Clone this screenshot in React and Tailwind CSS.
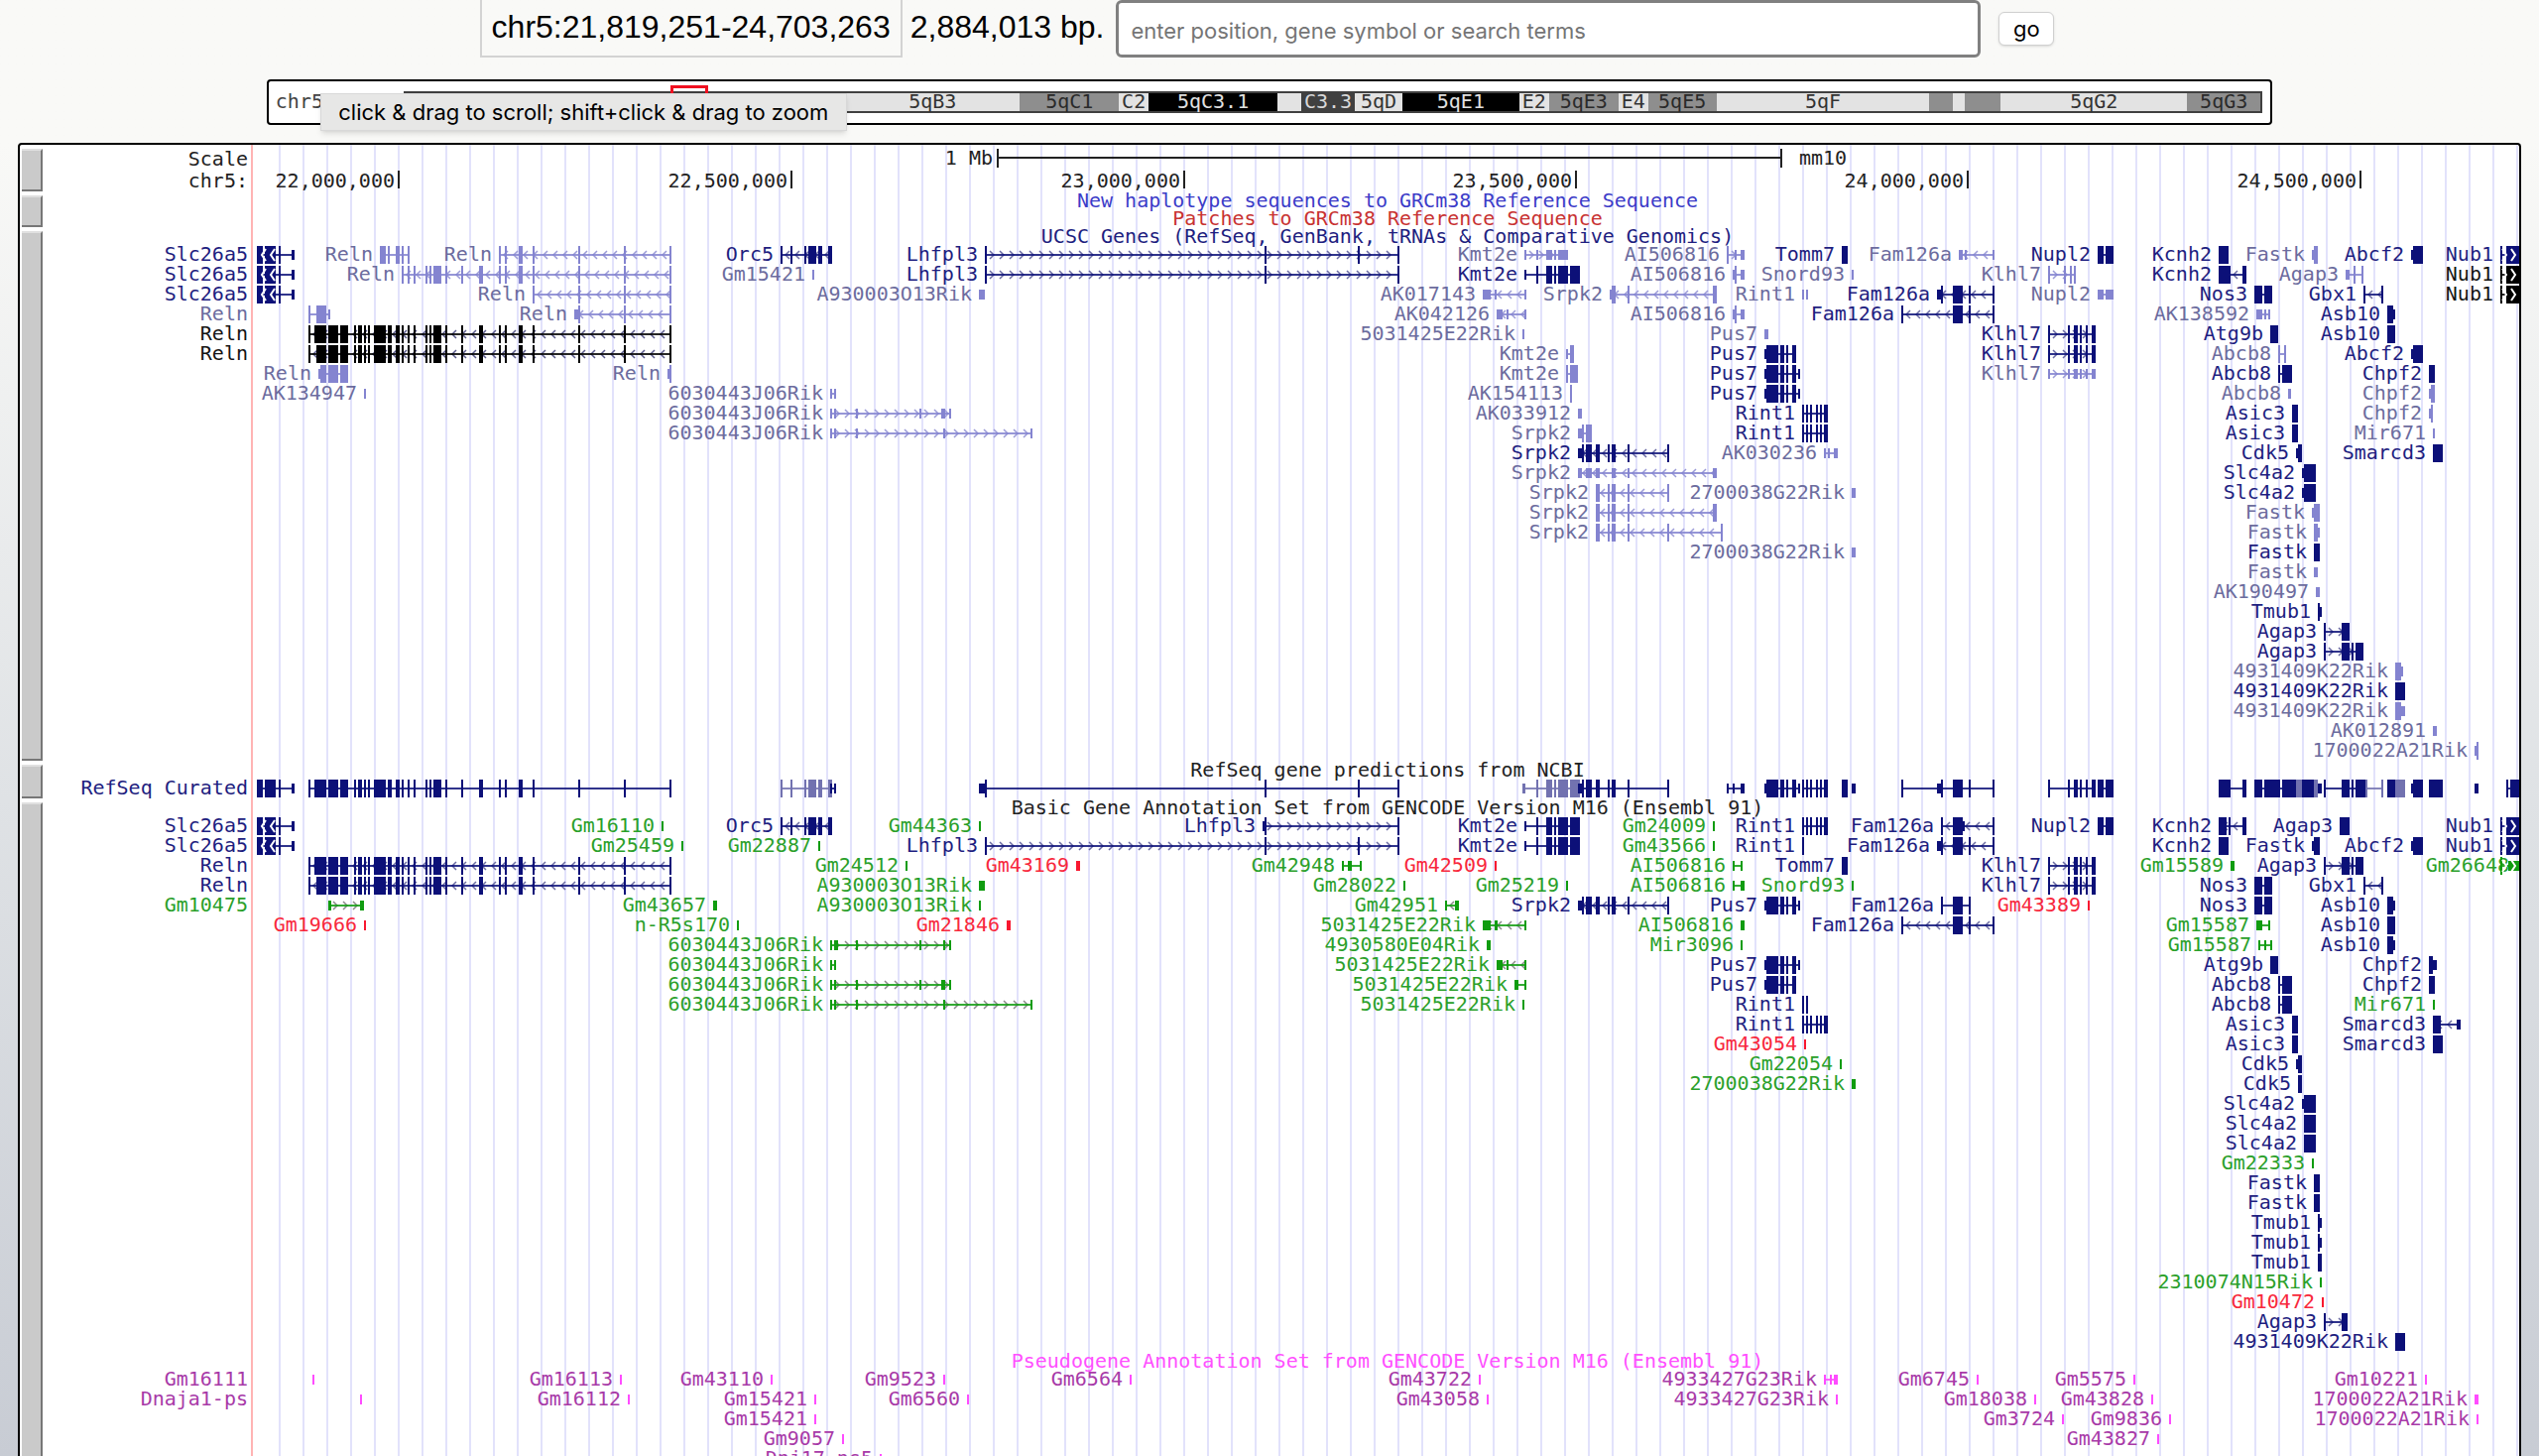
const COLORS = {
  D: { text: "#1e1e80", fill: "#0c1078", arrow: "#6c6ca4" },
  L: { text: "#6c6c9e", fill: "#8484d0", arrow: "#9c9cd8" },
  M: { text: "#7070ac", fill: "#7272b0", arrow: "#7272b0" },
  K: { text: "#141414", fill: "#000000", arrow: "#5a5a8c" },
  G: { text: "#2aa02a", fill: "#109c10", arrow: "#8a8a8a" },
  R: { text: "#f8283c", fill: "#f81830", arrow: "#f81830" },
  P: { text: "#a83aa8", fill: "#ff4cff", arrow: "#ff4cff" },
};

const CHART_LEFT = 256;
const CHART_WIDTH = 2284;
const ROW = 20;

const SLC = "259+6 267+11 281 u294+3";
const RELN_TAIL = "583 629 675";
const RELN_MID = "449 465 483+4 503 509 523+4 537 " + RELN_TAIL;
const RELN_CORE =
  "331+10 343+8 357 361+4 367 371 377+12 391+4 399+4 405 411 417 429 433 437+8 " + RELN_MID;
const RELN_A = "311 317+12 " + RELN_CORE;
const RELN_B = "311 319+10 " + RELN_CORE;
const ORC5 = "787 797 811 815+8 825+4 835+4";
const KMT2E = "u1537 1549 1559+6 1567 1571+10 1583+10";
const PUS7 = "u1779 1781+12 1795+4 1801 1807+4";
const PUS7_LONG = PUS7 + " u1813";
const RINT1 = "1817 1821 1825 1831 1835 1839+4";
const FAM_LONG = "1917 1969+10 1985 2009";
const FAM_MID = "u1953+4 1957 1969+10 1985 2009";
const KLHL7 = "2065 2085 2091+4 2097 2103 2109+4";
const NUPL2 = "2115+6 2123+8";
const KCNH2 = "2237+8 2247 2261+4";
const NOS3 = "2273+8 2283+8";
const ABCF2 = "u2431 2433+10";
const AGAP3 = "2343 2361+8 2371 2375+8";
const SRPK2 = "u1591+4 1595 1599+6 1609+4 1621 1625+4 1641 1681";
const SRPK2_B = "1609+4 1621 1625+4 1641";
const RIK603_A = "u837 u841 u863 u927 u949+4 u957";
const RIK603_B = "u837 u841 u863 u951 u1039";
const NUB1 = "2521 2527+13";

// Each gene: [label, colour key, strand, blocks]. A block is start+width, "u" marks a half-height one.
const UCSC = [
  [["", "D", "w<", SLC], ["Reln", "L", "", "383+6 391 399+4 405 411"], ["Reln", "L", "<", "503 509 523+4 537 " + RELN_TAIL], ["Orc5", "D", "<", ORC5], ["Lhfpl3", "D", ">", "993 1275 1369 1409"], ["Kmt2e", "L", ">", "u1537 u1549 u1559+6 u1567 u1571+10"], ["AI506816", "L", ">", "1741 u1749 u1755+4"], ["Tomm7", "D", "", "1857+6"], ["Fam126a", "L", "<", "u1975+4 u1981 u2009"], ["Nupl2", "D", "", NUPL2], ["Kcnh2", "D", "", "2237+10"], ["Fastk", "L", "", "u2331 2333+4"], ["Abcf2", "D", "", ABCF2], ["Nub1", "D", "w>", NUB1]],
  [["", "D", "w<", SLC], ["Reln", "L", "<", "405 411 417 429 433 437+8 " + RELN_MID], ["Gm15421", "L", "", "u819"], ["Lhfpl3", "D", ">", "993 1275 1409"], ["Kmt2e", "D", "", KMT2E], ["AI506816", "L", "", "u1747 1749 u1755+4"], ["Snord93", "L", "", "u1867"], ["Klhl7", "L", ">", "2065 2081 2087 2091"], ["Kcnh2", "D", "<", "2237+10 2247 2261+4"], ["Agap3", "L", "", "u2365+4 2373 2381"], ["Nub1", "K", "w>", NUB1]],
  [["", "D", "w<", SLC], ["Reln", "L", "<", "537 " + RELN_TAIL], ["A930003O13Rik", "L", "", "u987+6"], ["AK017143", "L", "<", "u1495+8 u1507 u1537"], ["Srpk2", "L", "<", "u1623 1625+4 1641 1727+4"], ["Rint1", "L", "-", "u1817 u1821"], ["Fam126a", "D", "<", FAM_MID], ["Nupl2", "L", "", "u2115+6 u2123+8"], ["Nos3", "D", "", NOS3], ["Gbx1", "D", "<", "2383 2401"], ["Nub1", "K", "w>", NUB1]],
  [["", "L", "", "311 319+10 u331"], ["Reln", "L", "<", "u579+4 " + RELN_TAIL], ["AK042126", "L", "<", "u1509+6 u1519 u1537"], ["AI506816", "L", "", "u1747 1749 u1755+4"], ["Fam126a", "D", "<", FAM_LONG], ["AK138592", "L", "", "u2275+6 u2283 u2287"], ["Asb10", "D", "", "2407+6 u2411+4"]],
  [["", "K", "<", RELN_A], ["5031425E22Rik", "L", "", "u1535"], ["Pus7", "L", "", "u1779+4"], ["Klhl7", "D", ">", KLHL7], ["Atg9b", "D", "", "2289+8"], ["Asb10", "D", "", "2407+8"]],
  [["", "K", "<", RELN_B], ["Kmt2e", "L", "", "u1579 1583+4"], ["Pus7", "D", "", PUS7], ["Klhl7", "D", ">", KLHL7], ["Abcb8", "L", "", "2297 2303"], ["Abcf2", "D", "", ABCF2]],
  [["Reln", "L", "", "u321 323+6 331+10 343+8"], ["Reln", "L", "", "u673 675"], ["Kmt2e", "L", "", "1579 1583+8"], ["Pus7", "D", "", PUS7_LONG], ["Klhl7", "L", ">", "u2065 u2085 u2091+4 u2097 u2103 u2109+4"], ["Abcb8", "D", "", "2297 2301+10"], ["Chpf2", "D", "", "2449+6"]],
  [["AK134947", "L", "", "u367"], ["6030443J06Rik", "L", "", "u837 u841"], ["AK154113", "L", "", "1583"], ["Pus7", "D", "", PUS7_LONG], ["Abcb8", "L", "", "u2307+3"], ["Chpf2", "L", "", "u2449 2451+4"]],
  [["6030443J06Rik", "L", ">", RIK603_A], ["AK033912", "L", "", "u1591+4"], ["Rint1", "D", "", RINT1], ["Asic3", "D", "", "2311+6"], ["Chpf2", "L", "", "u2449 2451"]],
  [["6030443J06Rik", "L", ">", RIK603_B], ["Srpk2", "L", "", "u1591+4 1595 1599+6"], ["Rint1", "D", "", RINT1], ["Asic3", "D", "", "2311+6"], ["Mir671", "L", "", "u2453"]],
  [["Srpk2", "D", "<", SRPK2], ["AK030236", "L", "", "u1839 u1843 u1849+4"], ["Cdk5", "D", "", "u2315 2317+4"], ["Smarcd3", "D", "", "2453+10"]],
  [["Srpk2", "L", "<", "u1591+4 u1599+6 u1609+4 u1625+4 u1641 u1727+4"], ["Slc4a2", "D", "", "u2321 2323+12"]],
  [["Srpk2", "L", "<", SRPK2_B + " 1681"], ["2700038G22Rik", "L", "", "u1867+4"], ["Slc4a2", "D", "", "u2321 2323+12"]],
  [["Srpk2", "L", "<", SRPK2_B + " 1727+4"], ["Fastk", "L", "", "u2331 2333+6"]],
  [["Srpk2", "L", "<", SRPK2_B + " 1681 1735"], ["Fastk", "L", "", "2333+4 u2335+4"]],
  [["2700038G22Rik", "L", "", "u1867+4"], ["Fastk", "D", "", "2333+6"]],
  [["Fastk", "L", "", "u2333+4"]],
  [["AK190497", "L", "", "u2335+4"]],
  [["Tmub1", "D", "", "2337 u2339"]],
  [["Agap3", "D", ">", "2343 2361+8"]],
  [["Agap3", "D", ">", AGAP3]],
  [["4931409K22Rik", "L", "", "2415+6 u2421"]],
  [["4931409K22Rik", "D", "", "2415+10"]],
  [["4931409K22Rik", "L", "", "2415+6 u2419+6"]],
  [["AK012891", "L", "", "u2453+4"]],
  [["1700022A21Rik", "L", "", "u2495 2497"]],
];

const REFSEQ = [
  [
    ["", "D", "", SLC], ["", "D", "", RELN_A], ["", "M", "", ORC5], ["", "D", "", "u837 u841"],
    ["", "D", "", "u987+6 993 1275 1369 1409"], ["", "M", "", "1549 1559+6 1567 1571+10 1583+10"], ["", "M", "", "u1535+3 1549"],
    ["", "D", "", SRPK2], ["", "D", "", "u1741 u1747 u1755+4"], ["", "D", "", PUS7_LONG], ["", "D", "", RINT1],
    ["", "D", "", "1857+6"], ["", "D", "", "u1867+4"], ["", "D", "", "1917 u1953+4 1957 1969+10 1985 2009"],
    ["", "D", "", KLHL7], ["", "D", "", NUPL2], ["", "D", "", "2237+12 2261+4"], ["", "D", "", "2273+8 2283+16 2301+14"],
    ["", "M", "", "2315+6"], ["", "D", "", "2321+12"], ["", "M", "", "2333+4"], ["", "D", "", "u2337+4"],
    ["", "D", "", "2343 2361+8 2371 2375+10"], ["", "M", "", "2385 2401"], ["", "D", "", "2407+8"], ["", "M", "", "2415+10"],
    ["", "D", "", ABCF2], ["", "D", "", "2449+14"], ["", "D", "", "u2495+4"], ["", "D", "", "2527 2531+9"],
  ],
];

const GENCODE = [
  [["", "D", "w<", SLC], ["Gm16110", "G", "", "u667"], ["Orc5", "D", "<", ORC5], ["Gm44363", "G", "", "u987"], ["Lhfpl3", "D", ">", "u1273 1275 1409"], ["Kmt2e", "D", "", KMT2E], ["Gm24009", "G", "", "u1727"], ["Rint1", "D", "", RINT1], ["Fam126a", "D", "<", "1957 1969+10 u1979 2009"], ["Nupl2", "D", "", NUPL2], ["Kcnh2", "D", "<", KCNH2], ["Agap3", "D", "", "2359+10"], ["Nub1", "D", "w>", NUB1]],
  [["", "D", "w<", SLC], ["Gm25459", "G", "", "u687"], ["Gm22887", "G", "", "u825"], ["Lhfpl3", "D", ">", "993 1275 1369 1409"], ["Kmt2e", "D", "", KMT2E], ["Gm43566", "G", "", "u1727"], ["Rint1", "D", "", "1817"], ["Fam126a", "D", "<", FAM_MID], ["Kcnh2", "D", "", "2237+10"], ["Fastk", "D", "", "u2331 2333+6"], ["Abcf2", "D", "", ABCF2], ["Nub1", "D", "w>", NUB1]],
  [["", "D", "<", RELN_A], ["Gm24512", "G", "", "u913"], ["Gm43169", "R", "", "u1085+4"], ["Gm42948", "G", "", "u1353 u1359+4 u1371"], ["Gm42509", "R", "", "u1507"], ["AI506816", "G", "", "u1747 u1755"], ["Tomm7", "D", "", "1857+6"], ["Klhl7", "D", ">", KLHL7], ["Gm15589", "G", "", "u2249+4"], ["Agap3", "D", ">", AGAP3], ["Gm26648", "G", "w>", "2521 u2529+11", 2530]],
  [["", "D", "<", RELN_B], ["A930003O13Rik", "G", "", "u987+6"], ["Gm28022", "G", "", "u1415"], ["Gm25219", "G", "", "u1579"], ["AI506816", "G", "", "u1747 u1755+4"], ["Snord93", "G", "", "u1867"], ["Klhl7", "D", ">", KLHL7], ["Nos3", "D", "", NOS3], ["Gbx1", "D", "<", "2383 2401"]],
  [["", "G", ">", "u331+3 u363+4"], ["Gm43657", "G", "", "u719+4"], ["A930003O13Rik", "G", "", "u987"], ["Gm42951", "G", "<", "u1457 u1467+4"], ["Srpk2", "D", "<", SRPK2], ["Pus7", "D", "", PUS7_LONG], ["Fam126a", "D", "", "1957 1969+10 1985"], ["Gm43389", "R", "", "u2105"], ["Nos3", "D", "", NOS3], ["Asb10", "D", "", "2407+6 u2411+4"]],
  [["Gm19666", "R", "", "u367"], ["n-R5s170", "G", "", "u743"], ["Gm21846", "R", "", "u1015+4"], ["5031425E22Rik", "G", "<", "u1495+8 u1507+3 u1537"], ["AI506816", "G", "", "u1755+4"], ["Fam126a", "D", "<", FAM_LONG], ["Gm15587", "G", "", "u2275+6 u2287"], ["Asb10", "D", "", "2407+8"]],
  [["6030443J06Rik", "G", ">", "u837 u841+4 u863 u927 u951 u957"], ["4930580E04Rik", "G", "", "u1499+4"], ["Mir3096", "G", "", "u1755"], ["Gm15587", "G", "", "u2277 u2283 u2289"], ["Asb10", "D", "", "2407+6 u2411+4"]],
  [["6030443J06Rik", "G", "", "u837 u841"], ["5031425E22Rik", "G", "<", "u1509+6 u1519 u1537"], ["Pus7", "D", "", PUS7_LONG], ["Atg9b", "D", "", "2289+8"], ["Chpf2", "D", "", "2449+4 u2453+4"]],
  [["6030443J06Rik", "G", ">", RIK603_A], ["5031425E22Rik", "G", "", "u1527+4 u1537"], ["Pus7", "D", "", PUS7], ["Abcb8", "D", "", "2297 2301+10"], ["Chpf2", "D", "", "2449+6"]],
  [["6030443J06Rik", "G", ">", RIK603_B], ["5031425E22Rik", "G", "", "u1535"], ["Rint1", "D", "-", "1817 1821"], ["Abcb8", "D", "", "2297 2301+10"], ["Mir671", "G", "", "u2453"]],
  [["Rint1", "D", "", RINT1], ["Asic3", "D", "", "2311+6"], ["Smarcd3", "D", "<", "2453+8 u2477+4"]],
  [["Gm43054", "R", "", "u1819"], ["Asic3", "D", "", "2311+6"], ["Smarcd3", "D", "", "2453+10"]],
  [["Gm22054", "G", "", "u1855"], ["Cdk5", "D", "", "u2315 2317+4"]],
  [["2700038G22Rik", "G", "", "u1867+4"], ["Cdk5", "D", "", "2317+4"]],
  [["Slc4a2", "D", "", "u2321 2323+12"]],
  [["Slc4a2", "D", "", "2323+12"]],
  [["Slc4a2", "D", "", "2323+12"]],
  [["Gm22333", "G", "", "u2331"]],
  [["Fastk", "D", "", "2333+6"]],
  [["Fastk", "D", "", "2333+6"]],
  [["Tmub1", "D", "", "2337 u2339"]],
  [["Tmub1", "D", "", "2337 u2339"]],
  [["Tmub1", "D", "", "2337+4"]],
  [["2310074N15Rik", "G", "", "u2339"]],
  [["Gm10472", "R", "", "u2341"]],
  [["Agap3", "D", ">", "2343 2361+6"]],
  [["4931409K22Rik", "D", "", "2415+10"]],
];

const PSEUDO = [
  [["", "P", "", "u315"], ["Gm16113", "P", "", "u625"], ["Gm43110", "P", "", "u777"], ["Gm9523", "P", "", "u951"], ["Gm6564", "P", "", "u1139"], ["Gm43722", "P", "", "u1491"], ["4933427G23Rik", "P", "", "u1839 u1845 u1849+4"], ["Gm6745", "P", "", "u1993"], ["Gm5575", "P", "", "u2151"], ["Gm10221", "P", "", "u2445"]],
  [["", "P", "", "u363"], ["Gm16112", "P", "", "u633"], ["Gm15421", "P", "", "u821"], ["Gm6560", "P", "", "u975"], ["Gm43058", "P", "", "u1499"], ["4933427G23Rik", "P", "", "u1851"], ["Gm18038", "P", "", "u2051"], ["Gm43828", "P", "", "u2169"], ["1700022A21Rik", "P", "", "u2495+4"]],
  [["Gm15421", "P", "", "u821"], ["Gm3724", "P", "", "u2079"], ["Gm9836", "P", "", "u2187"], ["1700022A21Rik", "P", "", "u2497"]],
  [["Gm9057", "P", "", "u849"], ["Gm43827", "P", "", "u2175"]],
  [["Dnj17-ps5", "P", "", "u887"]],
];

const BANDS = [
  [184, "black"], [16, "light"], [120, "black"], [126, "light"], [176, "light", "5qB3"], [100, "gray", "5qC1"], [30, "light", "C2"],
  [130, "black", "5qC3.1"], [24, "light"], [54, "dark", "C3.3"], [48, "light", "5qD"], [118, "black", "5qE1"], [30, "light", "E2"],
  [70, "gray", "5qE3"], [30, "light", "E4"], [69, "gray", "5qE5"], [215, "light", "5qF"], [24, "gray"], [12, "light"], [36, "gray"],
  [188, "light", "5qG2"], [74, "gray", "5qG3"],
];

const BAND_STYLES = {
  black: "bg-black text-[#e0e0e0]",
  dark: "bg-[#404040] text-[#d8d8d8]",
  gray: "bg-[#8e8e8e] text-[#2a2a2a]",
  light: "bg-[#e3e3e3] text-[#333333]",
};

const TICKS = [
  ["22,000,000", 401], ["22,500,000", 797], ["23,000,000", 1193],
  ["23,500,000", 1588], ["24,000,000", 1983], ["24,500,000", 2379],
];

const MONO = "font-['DejaVu_Sans_Mono','Liberation_Mono',monospace] text-[20px]";
const SANS = "font-['Inter','Liberation_Sans',sans-serif]";

const percent = (x) => `${((x - CHART_LEFT) / CHART_WIDTH) * 100}%`;

function parseBlocks(blocks) {
  return blocks.split(" ").map((token) => {
    const half = token[0] === "u";
    const [x, w] = token.slice(half ? 1 : 0).split("+").map(Number);
    return { x, w: w || 2, half };
  });
}

function chevrons(from, to, y, dir, step, reach) {
  let d = "";
  for (let x = from; x + 4 <= to; x += step) {
    d += dir === ">"
      ? `M${x} ${y - reach}l4 ${reach}l-4 ${reach}`
      : `M${x + 4} ${y - reach}l-4 ${reach}l4 ${reach}`;
  }
  return d;
}

function Gene({ gene, top }) {
  const [, tone, strand, spec] = gene;
  const color = COLORS[tone];
  const blocks = parseBlocks(spec);
  const first = blocks[0];
  const last = blocks[blocks.length - 1];
  const dir = strand[strand.length - 1];
  const overlay = strand[0] === "w";
  const end = last.x + last.w;
  return (
    <g>
      {!overlay && (dir === "<" || dir === ">") && (
        <path d={chevrons(first.x + 5, end, top + 10, dir, 10, 4)} fill="none" stroke={color.arrow} strokeWidth="1.5" />
      )}
      {blocks.length > 1 && strand !== "-" && (
        <rect x={first.x} y={top + 9} width={end - first.x} height="2" fill={color.fill} opacity="0.85" />
      )}
      {blocks.map((b, i) => (
        <rect key={i} x={b.x} y={top + (b.half ? 5 : 1)} width={b.w} height={b.half ? 10 : 18} fill={color.fill} />
      ))}
      {overlay && (
        <path
          d={chevrons(dir === ">" ? first.x + 2 : first.x + 5, dir === ">" ? end : first.x + 19, top + 10, dir, 9, 6)}
          fill="none"
          stroke="#ffffff"
          strokeWidth="2"
        />
      )}
    </g>
  );
}

function GeneChart({ rows }) {
  const height = rows.length * ROW;
  return (
    <svg className={`block w-full ${MONO}`} height={height} role="img" aria-label="Gene features">
      {rows.map((row, r) =>
        row.filter((gene) => gene[0]).map((gene, i) => (
          <text
            key={`${r}-${i}`}
            x={percent(gene[4] || parseBlocks(gene[3])[0].x - 7)}
            y={r * ROW + 16}
            textAnchor="end"
            fill={COLORS[gene[1]].text}
          >
            {gene[0]}
          </text>
        ))
      )}
      <svg width="100%" height={height} viewBox={`${CHART_LEFT} 0 ${CHART_WIDTH} ${height}`} preserveAspectRatio="none">
        {rows.map((row, r) => row.map((gene, i) => <Gene key={`${r}-${i}`} gene={gene} top={r * ROW} />))}
      </svg>
    </svg>
  );
}

function Handle({ label }) {
  return (
    <button
      type="button"
      aria-label={label}
      className="mt-1 ml-[2px] w-[21px] shrink-0 border-t-2 border-r-2 border-b-2 border-t-[#e0e0e0] border-r-[#777777] border-b-[#777777] bg-[#cacaca]"
    />
  );
}

function Track({ name, children }) {
  return (
    <section className="flex">
      <Handle label={name} />
      <div className="min-w-0 flex-1">{children}</div>
    </section>
  );
}

function Title({ className, children }) {
  return (
    <h2 className={`ml-[215px] h-[18px] text-center leading-[18px] whitespace-nowrap ${MONO} ${className}`}>{children}</h2>
  );
}

function Rows({ labels, children }) {
  return (
    <div className="flex">
      <div className={`flex w-[213px] shrink-0 flex-col pr-[6px] text-right ${MONO}`}>
        {labels.map(([text, tone], i) => (
          <span key={i} className="h-5 leading-[18px] whitespace-nowrap" style={{ color: COLORS[tone].text }}>
            {text}
          </span>
        ))}
      </div>
      <div className="min-w-0 flex-1">{children}</div>
    </div>
  );
}

function ScaleChart() {
  return (
    <svg className={`block w-full ${MONO}`} height="46" fill="#222222" role="img" aria-label="Scale">
      <svg width="100%" height="46" viewBox={`${CHART_LEFT} 0 ${CHART_WIDTH} 46`} preserveAspectRatio="none">
        <rect x="1005" y="11" width="792" height="2" />
        <rect x="1005" y="3" width="2" height="19" />
        <rect x="1795" y="3" width="2" height="19" />
        {TICKS.map(([label, x]) => (
          <rect key={label} x={x} y="25" width="2" height="18" />
        ))}
      </svg>
      <text x={percent(1001)} y="19" textAnchor="end">1 Mb</text>
      <text x={percent(1814)} y="19">mm10</text>
      {TICKS.map(([label, x]) => (
        <text key={label} x={percent(x - 3)} y="42" textAnchor="end">{label}</text>
      ))}
    </svg>
  );
}

function SearchBar() {
  return (
    <form className="flex h-[58px] items-stretch justify-center pr-[5px]" onSubmit={(e) => e.preventDefault()}>
      <output className="border-2 border-t-0 border-[#d3d3d3] px-[10px] font-['Liberation_Sans',Arial,sans-serif] text-[32px] leading-[54px] whitespace-nowrap">
        chr5:21,819,251-24,703,263
      </output>
      <span className="ml-2 font-['Liberation_Sans',Arial,sans-serif] text-[32px] leading-[54px] whitespace-nowrap">
        2,884,013 bp.
      </span>
      <input
        type="text"
        aria-label="Position or search term"
        placeholder="enter position, gene symbol or search terms"
        className={`ml-3 w-full max-w-[872px] rounded-md border-[3px] border-[#808080] bg-white px-3 pt-1 text-[22px] placeholder:text-[#757575] ${SANS}`}
      />
      <button
        type="submit"
        className={`mt-3 ml-[18px] h-[34px] w-14 shrink-0 rounded-md border border-[#d0d0d0] bg-white text-[22px] leading-[32px] shadow-sm ${SANS}`}
      >
        go
      </button>
    </form>
  );
}

function Ideogram() {
  return (
    <div className={`relative mx-auto mt-[22px] flex h-[46px] w-[79%] items-start rounded-[4px] border-2 border-black bg-white ${MONO}`}>
      <span className="w-[136px] shrink-0 pl-[7px] leading-[40px] text-[#444444]">chr5</span>
      <div className="relative mt-[10px] mr-2 flex h-[22px] flex-1 border-y-2 border-r-2 border-[#404040]">
        {BANDS.map(([size, tone, label], i) => (
          <div
            key={i}
            className={`min-w-0 basis-0 text-center leading-[17px] ${BAND_STYLES[tone]}`}
            style={{ flexGrow: size }}
          >
            {label}
          </div>
        ))}
        <div className="absolute -top-[8px] left-[269px] h-[34px] w-[38px] border-[3px] border-[#f01020]" />
      </div>
      <div
        role="tooltip"
        className={`absolute top-3 left-[52px] flex h-[38px] w-[531px] items-center justify-center border border-[#d8d8d8] bg-[#e7e7e6] text-[22px] whitespace-nowrap text-black shadow-md ${SANS}`}
      >
        click &amp; drag to scroll; shift+click &amp; drag to zoom
      </div>
    </div>
  );
}

export default function App() {
  return (
    <div className="h-screen overflow-hidden bg-linear-to-b from-[#f9f9f7] from-10% via-[#dfe2e5] via-55% to-[#c8ccd4] text-black">
      <SearchBar />
      <Ideogram />
      <main className="relative mx-[18px] mt-[18px] rounded-[4px] border-2 border-black bg-white">
        <div className="absolute inset-y-0 left-[233px] w-[2px] bg-[#ffb4b4]" />
        <div className="absolute inset-y-0 right-0 left-[261px] bg-[linear-gradient(90deg,#e2e2fb_2px,transparent_2px)] bg-size-[24px_100%]" />
        <div className="relative">
          <Track name="Ruler">
            <div className="flex pt-px">
              <div className={`flex w-[213px] shrink-0 flex-col pt-1 pr-[6px] text-right text-[#222222] ${MONO}`}>
                <span className="h-[22px] leading-[18px]">Scale</span>
                <span className="h-5 leading-[18px]">chr5:</span>
              </div>
              <div className="min-w-0 flex-1"><ScaleChart /></div>
            </div>
          </Track>
          <Track name="Haplotypes and patches">
            <Title className="text-[#3c3cc8]">New haplotype sequences to GRCm38 Reference Sequence</Title>
            <Title className="text-[#c83232]">Patches to GRCm38 Reference Sequence</Title>
          </Track>
          <Track name="UCSC Genes">
            <Title className="text-[#1e1e80]">UCSC Genes (RefSeq, GenBank, tRNAs &amp; Comparative Genomics)</Title>
            <Rows labels={[["Slc26a5", "D"], ["Slc26a5", "D"], ["Slc26a5", "D"], ["Reln", "L"], ["Reln", "K"], ["Reln", "K"]]}>
              <GeneChart rows={UCSC} />
            </Rows>
          </Track>
          <Track name="RefSeq">
            <Title className="text-[#222222]">RefSeq gene predictions from NCBI</Title>
            <Rows labels={[["RefSeq Curated", "D"]]}>
              <GeneChart rows={REFSEQ} />
            </Rows>
          </Track>
          <Track name="GENCODE">
            <Title className="text-[#222222]">Basic Gene Annotation Set from GENCODE Version M16 (Ensembl 91)</Title>
            <Rows labels={[["Slc26a5", "D"], ["Slc26a5", "D"], ["Reln", "D"], ["Reln", "D"], ["Gm10475", "G"]]}>
              <GeneChart rows={GENCODE} />
            </Rows>
            <Title className="text-[#ff50ff]">Pseudogene Annotation Set from GENCODE Version M16 (Ensembl 91)</Title>
            <Rows labels={[["Gm16111", "P"], ["Dnaja1-ps", "P"]]}>
              <GeneChart rows={PSEUDO} />
            </Rows>
          </Track>
        </div>
      </main>
    </div>
  );
}
